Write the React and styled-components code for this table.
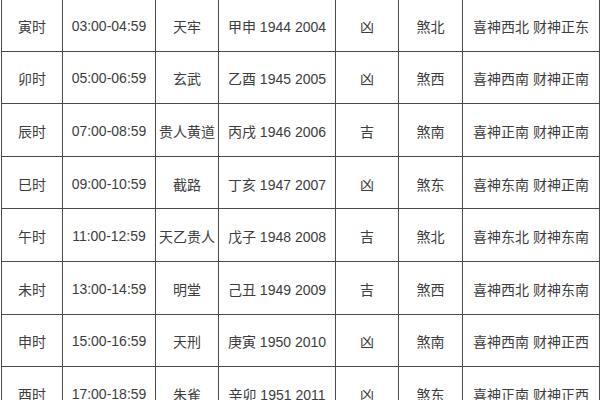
import React from "react";
import styled, { createGlobalStyle } from "styled-components";

const GlobalStyle = createGlobalStyle`
  html, body {
    margin: 0;
    padding: 0;
    background: #ffffff;
    overflow: hidden;
  }
`;

const Page = styled.div`
  width: 600px;
  height: 400px;
  overflow: hidden;
  padding-left: 1px;
  box-sizing: border-box;
`;

const Table = styled.table`
  margin-top: -2px;
  width: 598px;
  table-layout: fixed;
  border-collapse: collapse;
  font-family: "Liberation Sans", Arial, "Noto Sans CJK SC", sans-serif;
  font-size: 14px;
  color: #3d3d3d;
`;

const Row = styled.tr`
  height: 52.6px;
`;

const Cell = styled.td`
  border: 1.5px solid #4a4a4a;
  padding: 2px 0 0;
  text-align: center;
  vertical-align: middle;
  white-space: nowrap;
`;

const widths = [61, 93, 63, 117, 63, 64, 137];

const rows = [
  ["寅时", "03:00-04:59", "天牢", "甲申 1944 2004", "凶", "煞北", "喜神西北 财神正东"],
  ["卯时", "05:00-06:59", "玄武", "乙酉 1945 2005", "凶", "煞西", "喜神西南 财神正南"],
  ["辰时", "07:00-08:59", "贵人黄道", "丙戌 1946 2006", "吉", "煞南", "喜神正南 财神正南"],
  ["巳时", "09:00-10:59", "截路", "丁亥 1947 2007", "凶", "煞东", "喜神东南 财神正南"],
  ["午时", "11:00-12:59", "天乙贵人", "戊子 1948 2008", "吉", "煞北", "喜神东北 财神东南"],
  ["未时", "13:00-14:59", "明堂", "己丑 1949 2009", "吉", "煞西", "喜神西北 财神东南"],
  ["申时", "15:00-16:59", "天刑", "庚寅 1950 2010", "凶", "煞南", "喜神西南 财神正西"],
  ["酉时", "17:00-18:59", "朱雀", "辛卯 1951 2011", "凶", "煞东", "喜神正南 财神正西"],
];

export default function App() {
  return (
    <Page>
      <GlobalStyle />
      <Table>
        <colgroup>
          {widths.map((w, i) => (
            <col key={i} style={{ width: w }} />
          ))}
        </colgroup>
        <tbody>
          {rows.map((r) => (
            <Row key={r[0]}>
              {r.map((c, i) => (
                <Cell key={i}>{c}</Cell>
              ))}
            </Row>
          ))}
        </tbody>
      </Table>
    </Page>
  );
}
